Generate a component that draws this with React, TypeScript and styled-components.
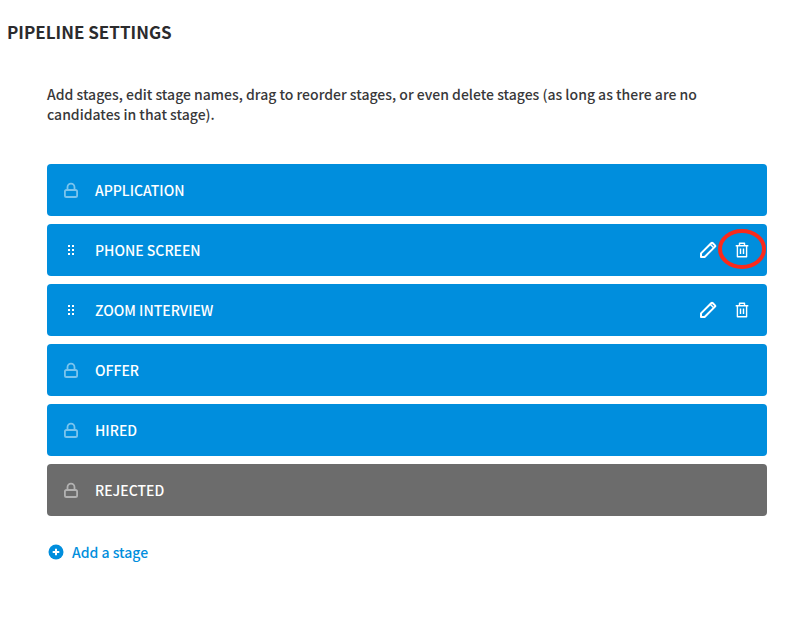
import React from "react";
import styled, { createGlobalStyle } from "styled-components";

const GlobalStyle = createGlobalStyle`
  *, *::before, *::after { box-sizing: border-box; }
  body {
    margin: 0;
    background: #ffffff;
    color: #2b2b2d;
    font-family: "Noto Sans CJK SC", "Noto Sans", sans-serif;
    font-size: 14px;
    font-weight: 500;
    line-height: 20px;
  }
`;

const Page = styled.main`
  padding: 20px 40px 40px 7px;
`;

const Title = styled.h1`
  margin: 0;
  font-size: 17px;
  line-height: 24px;
  font-weight: 700;
`;

const Content = styled.section`
  padding: 40px 0 0 40px;
`;

const Intro = styled.p`
  margin: 0 0 40px;
  max-width: 680px;
  color: #38383a;
`;

const StageList = styled.ul`
  display: flex;
  flex-direction: column;
  gap: 8px;
  margin: 0;
  padding: 0;
  list-style: none;
`;

const StageRow = styled.li<{ $rejected?: boolean }>`
  display: flex;
  align-items: center;
  gap: 16px;
  height: 52px;
  padding: 0 13px 0 16px;
  border-radius: 4px;
  background: ${(p) => (p.$rejected ? "#6c6c6c" : "#008edd")};
  color: #ffffff;
`;

const Marker = styled.span`
  display: flex;
  width: 16px;
  height: 16px;
`;

const StageName = styled.span`
  flex: 1;
`;

const Actions = styled.div`
  display: flex;
  gap: 10px;
`;

const IconButton = styled.button`
  position: relative;
  display: flex;
  align-items: center;
  justify-content: center;
  width: 24px;
  height: 24px;
  padding: 0;
  border: 0;
  background: none;
  color: inherit;
  cursor: pointer;
`;

const HighlightRing = styled.svg`
  position: absolute;
  top: -9px;
  left: -12px;
  pointer-events: none;
`;

const AddButton = styled.button`
  display: flex;
  align-items: center;
  gap: 8px;
  margin: 26px 0 0;
  padding: 0 0 0 1px;
  border: 0;
  background: none;
  color: #008edd;
  font: inherit;
  cursor: pointer;
`;

const LockIcon = () => (
  <svg width="16" height="16" viewBox="0 0 16 16" fill="none" stroke="#ffffff" strokeOpacity="0.48" strokeWidth="1.8" aria-hidden="true">
    <path d="M4.5 8V5.2a3.5 3.5 0 0 1 7 0V8M3.5 8h9q1.6 0 1.6 1.6v3.8q0 1.6-1.6 1.6h-9q-1.6 0-1.6-1.6V9.6Q1.9 8 3.5 8z" />
  </svg>
);

const GripIcon = () => (
  <svg width="16" height="16" viewBox="0 0 16 16" fill="#ffffff" shapeRendering="crispEdges" aria-hidden="true">
    <path d="M5 3h2v2H5zM9 3h2v2H9zM5 7h2v2H5zM9 7h2v2H9zM5 11h2v2H5zM9 11h2v2H9z" />
  </svg>
);

const PencilIcon = () => (
  <svg width="18" height="18" viewBox="0 0 18 18" fill="none" stroke="currentColor" strokeWidth="2" strokeLinejoin="round" aria-hidden="true">
    <path d="M2 16v-3.6L12.4 2q.6-.5 1.2 0L16 4.4q.6.6 0 1.2L5.6 16z" />
    <path d="M11.2 3.3l3.5 3.5" strokeWidth="1.4" />
  </svg>
);

const TrashIcon = () => (
  <svg width="16" height="16" viewBox="0 0 16 16" fill="none" stroke="currentColor" strokeWidth="1.4" strokeLinejoin="round" aria-hidden="true">
    <path d="M1.7 3.7h12.6M5.5 3.5V1.3h5v2.2M3.4 3.9v10.8h9.2V3.9" />
    <path d="M6.5 6.5v5.5M9.5 6.5v5.5" />
  </svg>
);

const PlusIcon = () => (
  <svg width="16" height="16" viewBox="0 0 16 16" aria-hidden="true">
    <circle cx="8" cy="8" r="7.5" fill="#008edd" />
    <path d="M8 4.7v6.6M4.7 8h6.6" stroke="#ffffff" strokeWidth="2" />
  </svg>
);

interface Stage {
  name: string;
  editable?: boolean;
  rejected?: boolean;
  highlighted?: boolean;
}

const stages: Stage[] = [
  { name: "APPLICATION" },
  { name: "PHONE SCREEN", editable: true, highlighted: true },
  { name: "ZOOM INTERVIEW", editable: true },
  { name: "OFFER" },
  { name: "HIRED" },
  { name: "REJECTED", rejected: true },
];

export default function App() {
  return (
    <>
      <GlobalStyle />
      <Page>
        <Title>PIPELINE SETTINGS</Title>
        <Content>
          <Intro>
            Add stages, edit stage names, drag to reorder stages, or even delete stages (as long as there are no
            candidates in that stage).
          </Intro>
          <StageList>
            {stages.map((stage) => (
              <StageRow key={stage.name} $rejected={stage.rejected}>
                <Marker>{stage.editable ? <GripIcon /> : <LockIcon />}</Marker>
                <StageName>{stage.name}</StageName>
                {stage.editable && (
                  <Actions>
                    <IconButton type="button" aria-label={`Edit ${stage.name}`}>
                      <PencilIcon />
                    </IconButton>
                    <IconButton type="button" aria-label={`Delete ${stage.name}`}>
                      <TrashIcon />
                      {stage.highlighted && (
                        <HighlightRing width="48" height="40" viewBox="0 0 48 40" fill="none" aria-hidden="true">
                          <ellipse cx="24" cy="20" rx="22" ry="18" stroke="#fa2a1b" strokeWidth="4" />
                        </HighlightRing>
                      )}
                    </IconButton>
                  </Actions>
                )}
              </StageRow>
            ))}
          </StageList>
          <AddButton type="button">
            <PlusIcon />
            Add a stage
          </AddButton>
        </Content>
      </Page>
    </>
  );
}
